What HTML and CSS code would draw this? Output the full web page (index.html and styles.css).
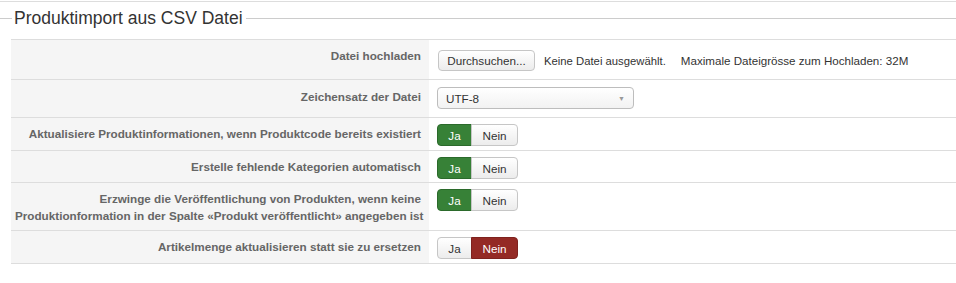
FILE: index.html
```html
<!DOCTYPE html>
<html lang="de">
<head>
    <meta charset="UTF-8">
    <title>Produktimport</title>
    <link rel="stylesheet" href="styles.css">
</head>
<body>
    <div class="page">
        <div class="section-title">
            <span>Produktimport aus CSV Datei</span>
        </div>

        <table class="import-table">
            <tr class="row-file">
                <td class="label-cell">Datei hochladen</td>
                <td class="value-cell">
                    <div class="file-field">
                        <button class="btn">Durchsuchen...</button>
                        <span class="file-name">Keine Datei ausgewählt.</span>
                        <span class="file-hint">Maximale Dateigrösse zum Hochladen: 32M</span>
                    </div>
                </td>
            </tr>
            <tr class="row-select">
                <td class="label-cell">Zeichensatz der Datei</td>
                <td class="value-cell">
                    <div class="select">
                        <span>UTF-8</span>
                        <span class="select-arrow">&#9660;</span>
                    </div>
                </td>
            </tr>
            <tr>
                <td class="label-cell">Aktualisiere Produktinformationen, wenn Produktcode bereits existiert</td>
                <td class="value-cell">
                    <div class="yesno">
                        <span class="btn btn-yes active">Ja</span>
                        <span class="btn btn-no">Nein</span>
                    </div>
                </td>
            </tr>
            <tr class="row-tight">
                <td class="label-cell">Erstelle fehlende Kategorien automatisch</td>
                <td class="value-cell">
                    <div class="yesno">
                        <span class="btn btn-yes active">Ja</span>
                        <span class="btn btn-no">Nein</span>
                    </div>
                </td>
            </tr>
            <tr>
                <td class="label-cell">Erzwinge die Veröffentlichung von Produkten, wenn keine<br>Produktionformation in der Spalte «Produkt veröffentlicht» angegeben ist</td>
                <td class="value-cell">
                    <div class="yesno">
                        <span class="btn btn-yes active">Ja</span>
                        <span class="btn btn-no">Nein</span>
                    </div>
                </td>
            </tr>
            <tr>
                <td class="label-cell">Artikelmenge aktualisieren statt sie zu ersetzen</td>
                <td class="value-cell">
                    <div class="yesno">
                        <span class="btn btn-yes">Ja</span>
                        <span class="btn btn-no active">Nein</span>
                    </div>
                </td>
            </tr>
        </table>
    </div>
</body>
</html>
```

FILE: styles.css
```css
* {
    margin: 0;
    padding: 0;
    box-sizing: border-box;
}

body {
    font-family: "Liberation Sans", Arial, sans-serif;
    font-size: 12px;
    color: #333;
    background: #fff;
}

.page {
    margin-top: 1px;
    border-top: 1px solid #ddd;
}

/* Legend with line on both sides */
.section-title {
    display: flex;
    align-items: center;
    height: 37px;
    padding-top: 2px;
    padding-bottom: 7px;
    font-size: 17.5px;
    color: #333;
}

.section-title::before,
.section-title::after {
    content: "";
    border-top: 1px solid #ccc;
}

.section-title::before {
    width: 12px;
}

.section-title::after {
    flex: 1;
}

.section-title span {
    padding: 0 3px 0 2px;
}

.import-table {
    margin-left: 11px;
    width: calc(100% - 11px);
    border-collapse: collapse;
    table-layout: fixed;
}

.import-table td {
    border-top: 1px solid #ddd;
    border-bottom: 1px solid #ddd;
}

.label-cell {
    width: 418px;
    background: #f5f5f5;
    text-align: right;
    vertical-align: top;
    white-space: nowrap;
    padding: 7px 8px 6px 4px;
    font-weight: bold;
    font-size: 11.7px;
    line-height: 17px;
    color: #666;
}

.value-cell {
    vertical-align: top;
    padding: 6px 8px 4px;
}

.row-tight .value-cell {
    padding-bottom: 3px;
}

.row-file .value-cell {
    padding: 10px 8px 8px;
}

.row-select .label-cell {
    padding-top: 8px;
}

.row-select .value-cell {
    padding: 7px 8px 8px;
}

.btn {
    display: inline-flex;
    align-items: center;
    justify-content: center;
    height: 22px;
    padding: 0 8px;
    font-family: inherit;
    font-size: 11.7px;
    color: #333;
    background: linear-gradient(#fff, #ececec);
    border: 1px solid #c6c6c6;
    border-radius: 4px;
    cursor: pointer;
}

.file-field {
    display: flex;
    align-items: center;
}

.file-field .btn {
    width: 97px;
    height: 21px;
    margin-left: 1px;
}

.file-name {
    margin-left: 9px;
    font-size: 11.3px;
    color: #333;
}

.file-hint {
    margin-left: 15px;
    font-size: 11.6px;
    color: #333;
}

.select {
    display: flex;
    align-items: center;
    justify-content: space-between;
    width: 197px;
    height: 22px;
    padding: 0 8px 0 8px;
    background: linear-gradient(#fff, #f2f2f2);
    border: 1px solid #bdbdbd;
    border-radius: 4px;
    font-size: 11.7px;
    color: #333;
}

.select-arrow {
    font-size: 7px;
    color: #999;
}

.yesno {
    display: flex;
}

.yesno .btn {
    height: 22px;
}

.yesno .btn-yes {
    width: 35px;
    border-radius: 4px 0 0 4px;
}

.yesno .btn-no {
    width: 47px;
    margin-left: -1px;
    border-radius: 0 4px 4px 0;
}

.btn-yes.active {
    background: #378137;
    border-color: #2b6a2b;
    color: #fff;
}

.btn-no.active {
    background: #942a25;
    border-color: #7e221e;
    color: #fff;
}
```
